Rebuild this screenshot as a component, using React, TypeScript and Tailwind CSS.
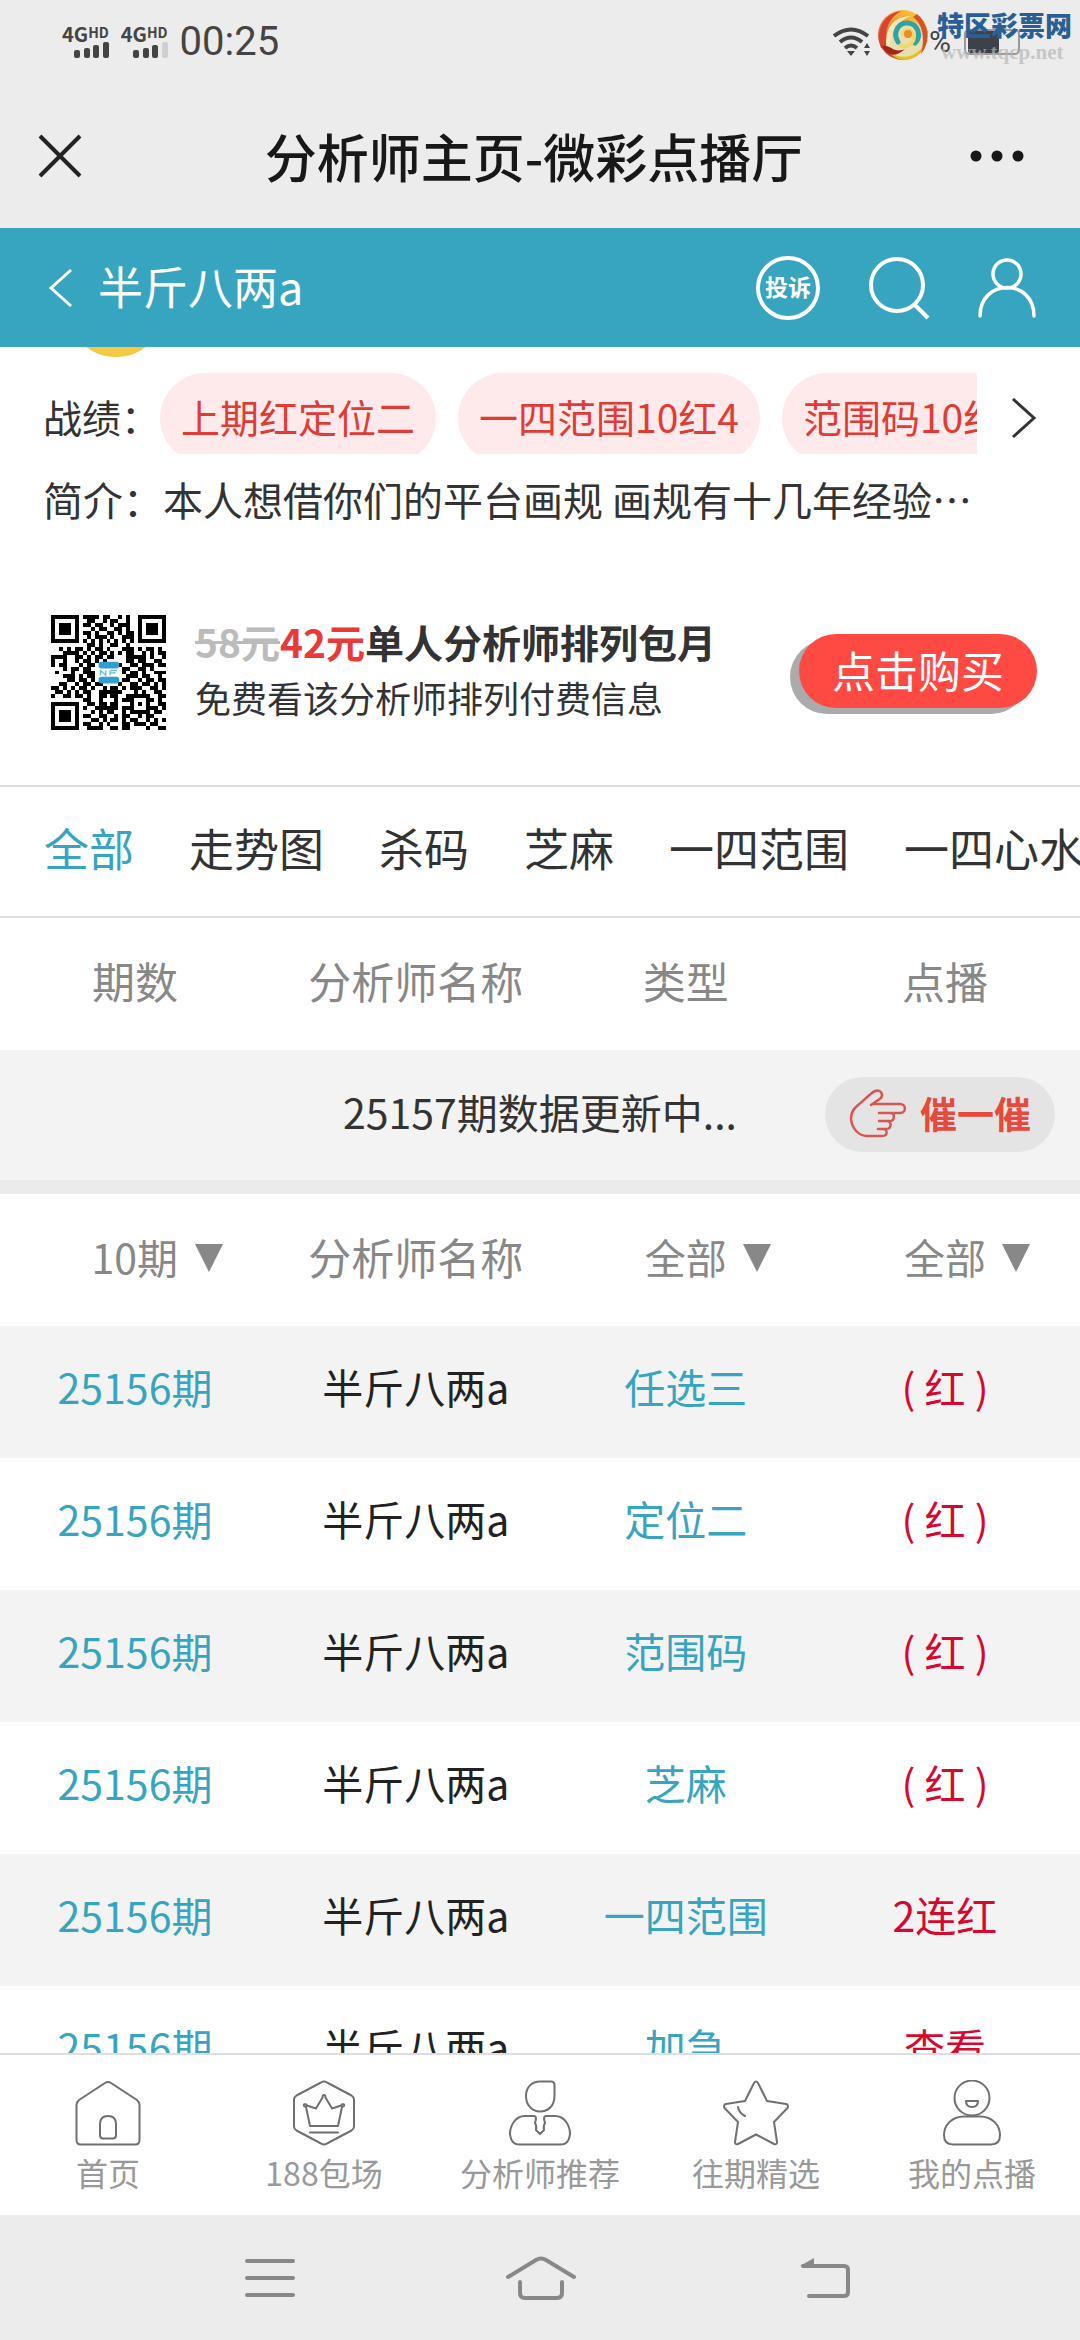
import type { ReactNode } from 'react';

const records = ['上期红定位二', '一四范围10红4', '范围码10红5'];

const tabs = ['全部', '走势图', '杀码', '芝麻', '一四范围', '一四心水'];

const rows = [
  { issue: '25156期', name: '半斤八两a', type: '任选三', result: '( 红 )' },
  { issue: '25156期', name: '半斤八两a', type: '定位二', result: '( 红 )' },
  { issue: '25156期', name: '半斤八两a', type: '范围码', result: '( 红 )' },
  { issue: '25156期', name: '半斤八两a', type: '芝麻', result: '( 红 )' },
  { issue: '25156期', name: '半斤八两a', type: '一四范围', result: '2连红' },
  { issue: '25156期', name: '半斤八两a', type: '加急', result: '查看' },
];

const qrRows = [
  '#######.####.##..#.#..#######',
  '#.....#..##..#.##..#..#.....#',
  '#.###.#.##.##..#.###..#.###.#',
  '#.###.#...#.##..##.#..#.###.#',
  '#.###.#.##.#..##.#.##.#.###.#',
  '#.....#..#.###.#..###.#.....#',
  '#######.#.#.#.#.#.#.#.#######',
  '.........##.#..##..#.........',
  '..#.#.##.#.##.#...###.#.##.#.',
  '...####.#.#.##.#.#.##..#.#.##',
  '####..##.#.##.##...#####.#..#',
  '#..#..#.##.#.#.....##.##..##.',
  '#.##...#.##......#..##.###.##',
  '...#.##.##........##..##.#...',
  '.#...#..###.......#.##.#..###',
  '...###.#.##........###.##..#.',
  '....##.##.#.......##..#.##.##',
  '..##..#.##.##....#..##.##.#.#',
  '##.#.#.##.#..#.##.#.###..##.#',
  '.##.#.#.##..######...#.#..##.',
  '#..##.##.#..##.##..######..##',
  '........##..#...#.###...##.#.',
  '#######..##.##.##...#.#.#..##',
  '#.....#.#..######.###...###.#',
  '#.###.#...#.#.##..#.#####.##.',
  '#.###.#.##..##..#.##..#.##...',
  '#.###.#...##.#.##.#.##..#.#.#',
  '#.....#.##..#.#...##.###.##..',
  '#######..####..##.##....#..##',
];

const qrPath = qrRows
  .flatMap((row, y) => [...row].map((c, x) => (c === '#' ? `M${x} ${y}h1v1h-1z` : '')))
  .join('');

const navItems: { label: string; icon: ReactNode }[] = [
  {
    label: '首页',
    icon: (
      <>
        <path d="M1.5 25Q1.5 22 4 20L30 3Q33 1 36 3L62 20Q64.5 22 64.5 25V60Q64.5 64.5 60 64.5H6Q1.5 64.5 1.5 60Z" />
        <path d="M25 44Q25 36 33 36Q41 36 41 44V55Q41 58.5 38 58.5H28Q25 58.5 25 55Z" />
      </>
    ),
  },
  {
    label: '188包场',
    icon: (
      <>
        <path d="M30 2.5Q33 .5 36 2.5L60.5 15.5Q63 17 63 19.5V46.5Q63 49 60.5 50.5L36 63.5Q33 65.5 30 63.5L5.5 50.5Q3 49 3 46.5V19.5Q3 17 5.5 15.5Z" />
        <path d="M15 27Q12 26 13 24.5Q15 23.5 16 25.5L25 28.5L31.5 17.5Q31.5 15 33 15Q34.5 15 34.5 17.5L41 28.5L50 25.5Q51 23.5 53 24.5Q54 26 51 27L47 46H19ZM19 52.5H47" />
      </>
    ),
  },
  {
    label: '分析师推荐',
    icon: (
      <>
        <path d="M33 1.5H44Q47.5 1.5 47.5 5V16C47.5 26 41 31.5 33 31.5C25 31.5 19 25 19 16C19 7 25 1.5 33 1.5Z" />
        <path d="M27 36H18C8 36 3 46 3 54Q4 64.5 12 64.5H54Q62 64.5 63 54C63 46 58 36 48 36H39Q37 36 37 39L38 43Q36 46 37 50L33 54L29 50Q30 46 28 43L29 39Q29 36 27 36Z" />
      </>
    ),
  },
  {
    label: '往期精选',
    icon: (
      <>
        <path d="M31 3Q33 0 35 3L44 21L63 24Q66 25 64.5 28L51 42L54 62Q54 65 51 64L33 54.5L15 64Q12 65 12 62L15 42L1.5 28Q0 25 3 24L22 21Z" />
        <path d="M15 27Q16 33 22 36" />
      </>
    ),
  },
  {
    label: '我的点播',
    icon: (
      <>
        <circle cx="33" cy="18" r="17.5" />
        <path d="M27 21H39Q39 27 33 27Q27 27 27 21Z" />
        <path d="M25 36.5H41C54 36.5 61 46 61 55Q61 64.5 52 64.5H14Q5 64.5 5 55C5 46 12 36.5 25 36.5Z" />
      </>
    ),
  },
];

function Signal({ weak = false }: { weak?: boolean }) {
  return (
    <div className="flex flex-col items-end text-[#444]">
      <div className="flex items-start font-bold leading-4">
        <span className="text-[20px]">4G</span>
        <span className="text-[14px] leading-3">HD</span>
      </div>
      <svg width="36" height="16" viewBox="0 0 36 16" fill="currentColor">
        <rect x="1" y="8" width="6" height="8" rx="2" />
        <rect x="11" y="6" width="6" height="10" rx="2" />
        <rect x="20" y="3" width="6" height="13" rx="2" />
        <rect x="30" y="0" width="6" height="16" rx="2" fill={weak ? '#d0d0d0' : 'currentColor'} />
      </svg>
    </div>
  );
}

function StatusBar() {
  return (
    <div className="relative flex h-[84px] items-center justify-between pl-[62px] pr-[57px]">
      <div className="flex items-center gap-3">
        <Signal />
        <Signal weak />
        <span className="font-['Roboto',sans-serif] text-[40px] leading-[40px] text-[#444]">00:25</span>
      </div>
      <div className="flex items-center text-[#444]">
        <svg width="40" height="30" viewBox="0 0 40 30" fill="none" stroke="currentColor" strokeWidth="4">
          <path d="M1 9Q18 -4 35 9" />
          <path d="M7 15Q18 6 29 15" />
          <path d="M12 21Q18 16 24 21" />
          <path d="M14 24H22L18 29ZM31 21L34 16L37 21ZM31 24L34 29L37 24Z" fill="currentColor" stroke="none" />
        </svg>
        <span className="w-[90px] pr-3 text-right font-['Roboto',sans-serif] text-[30px] leading-[30px]">67%</span>
        <svg width="60" height="28" viewBox="0 0 60 28">
          <rect x="2" y="2" width="54" height="24" rx="4" fill="none" stroke="#999" strokeWidth="2" />
          <rect x="5" y="3" width="31" height="22" rx="2" fill="#3d424a" />
        </svg>
      </div>
      <div className="absolute right-2 top-2 flex items-center gap-2">
        <SiteLogo />
        <div className="flex flex-col">
          <span className="text-[27px] font-black leading-[34px] text-[#2a5f96]">特区彩票网</span>
          <span className="pl-1 font-['Liberation_Serif',serif] text-[21px] font-bold leading-5 text-[#b5b5b5]/70">www.tqcp.net</span>
        </div>
      </div>
    </div>
  );
}

function SiteLogo() {
  return (
    <svg width="52" height="54" viewBox="0 0 52 54" fill="none" strokeLinecap="round">
      <defs>
        <linearGradient id="ball" x1="0" y1="1" x2="1" y2="0">
          <stop offset="0" stopColor="#b3261e" />
          <stop offset="0.45" stopColor="#f2913a" />
          <stop offset="1" stopColor="#ffd52e" />
        </linearGradient>
      </defs>
      <circle cx="26" cy="27" r="25" fill="url(#ball)" />
      <path d="M4 40C-2 20 8 5 24 3C12 10 6 22 10 40Z" fill="#d9432f" />
      <path d="M10 42C6 22 16 8 34 8C22 12 14 22 18 40Z" fill="#fbe6b8" />
      <path d="M12 42C14 22 24 12 38 14C48 20 50 34 42 44C32 54 18 52 12 42Z" fill="#e8dfae" />
      <path d="M40 6C52 16 54 34 44 46C48 30 46 16 36 9Z" fill="#d8502c" />
      <path d="M12 44C24 52 38 50 46 38C42 52 24 58 12 44Z" fill="#e7c21f" />
      <path d="M21 34C15 24 22 14 31 15C41 16 45 28 38 35" stroke="#2ea3a5" strokeWidth="5" />
      <path d="M24 38C32 40 39 33 36 26C34 21 27 21 26 26" stroke="#f0d96a" strokeWidth="4" />
      <circle cx="31" cy="26" r="4" fill="#f28a1e" />
      <path d="M5 38C14 36 16 46 28 41C18 50 10 48 5 38Z" fill="#a3241d" />
    </svg>
  );
}

function TitleBar() {
  return (
    <div className="flex h-36 items-center justify-between pl-[38px] pr-[56px]">
      <button aria-label="关闭">
        <svg width="44" height="44" viewBox="0 0 44 44" stroke="#222" strokeWidth="4">
          <path d="M2 2L42 42M42 2L2 42" />
        </svg>
      </button>
      <h1 className="pl-4 text-[52px] font-medium leading-[60px] text-[#181818]">分析师主页-微彩点播厅</h1>
      <button aria-label="更多">
        <svg width="54" height="12" viewBox="0 0 54 12" fill="#181818">
          <circle cx="6" cy="6" r="5.5" />
          <circle cx="27" cy="6" r="5.5" />
          <circle cx="48" cy="6" r="5.5" />
        </svg>
      </button>
    </div>
  );
}

function AppHeader() {
  return (
    <header className="relative z-10 flex h-[119px] shrink-0 items-center justify-between bg-[#37a5bf] pl-12 pr-[44px] text-white">
      <a href="#back" className="flex items-center gap-[25px]">
        <svg width="25" height="40" viewBox="0 0 25 40" fill="none" stroke="currentColor" strokeWidth="3">
          <path d="M23 2L3 20L23 38" />
        </svg>
        <span className="pb-1 text-[45px] leading-[60px]">半斤八两a</span>
      </a>
      <div className="flex items-center gap-12">
        <button className="flex size-16 items-center justify-center rounded-full border-4 border-white pb-1 text-[23px] font-bold leading-6">
          投诉
        </button>
        <button aria-label="搜索">
          <svg width="62" height="64" viewBox="0 0 62 64" fill="none" stroke="currentColor" strokeWidth="4">
            <circle cx="29" cy="29" r="26" />
            <path d="M46 48L60 62" />
          </svg>
        </button>
        <button aria-label="我的">
          <svg width="58" height="60" viewBox="0 0 58 60" fill="none" stroke="currentColor" strokeWidth="3.5" strokeLinecap="round">
            <circle cx="29" cy="16" r="14" />
            <path d="M2 58C2 20 56 20 56 58" />
          </svg>
        </button>
      </div>
    </header>
  );
}

function Profile() {
  return (
    <section className="text-[#333]">
      <div className="h-[26px] overflow-hidden pl-[66px]">
        <div className="-mt-[90px] size-[100px] rounded-full bg-[#f6c944]" />
      </div>
      <div className="flex h-[81px] items-start pl-[43px] pr-[43px]">
        <span className="w-[117px] shrink-0 text-[39px] leading-[86px]">战绩：</span>
        <div className="flex h-full min-w-0 flex-1 gap-[22px] overflow-hidden">
          {records.map((record) => (
            <span
              key={record}
              className="h-[90px] shrink-0 whitespace-nowrap rounded-full bg-[#feeaea] px-[21px] text-[39px] leading-[86px] text-[#e03c36]"
            >
              {record}
            </span>
          ))}
        </div>
        <button aria-label="更多战绩" className="flex h-[90px] w-[60px] shrink-0 items-center justify-end">
          <svg width="26" height="42" viewBox="0 0 26 42" fill="none" stroke="#333" strokeWidth="3">
            <path d="M2 2L23 21L2 40" />
          </svg>
        </button>
      </div>
      <div className="flex h-[96px] pl-[43px] pr-11 text-[40px] leading-[90px]">
        <span className="shrink-0">简介：</span>
        <p className="whitespace-nowrap">本人想借你们的平台画规 画规有十几年经验⋯</p>
      </div>
    </section>
  );
}

function Purchase() {
  return (
    <section className="flex h-[235px] items-center justify-between pl-[51px] pr-[43px] pt-[10px] text-[#333]">
      <div className="flex items-center gap-[29px]">
        <svg width="115" height="115" viewBox="0 0 29 29" shapeRendering="crispEdges">
          <path d={qrPath} fill="#000" />
          <g shapeRendering="auto">
            <rect x="12" y="11.8" width="5.2" height="1.7" rx=".7" fill="#2f9fd0" />
            <rect x="12" y="15.6" width="5.2" height="1.7" rx=".7" fill="#2f9fd0" />
            <path d="M12.5 15.2V14L13.8 15.2V14M14.9 14V15.2M16.6 14H15.1M15.1 14.6H16.3" fill="none" stroke="#6db9da" strokeWidth=".35" />
          </g>
        </svg>
        <div className="pb-2">
          <p className="text-[39px] font-bold leading-[56px]">
            <del className="text-[#bbb]">58元</del>
            <span className="text-[#e93a3a]">42元</span>
            单人分析师排列包月
          </p>
          <p className="text-[36px] leading-[56px]">免费看该分析师排列付费信息</p>
        </div>
      </div>
      <button className="mb-1 h-[74px] w-[238px] rounded-full bg-[#ff4a44] pb-1 text-[43px] leading-[64px] text-white shadow-[-9px_6px_0_#aaabad]">
        点击购买
      </button>
    </section>
  );
}

function FilterSelect({ label, options }: { label: string; options: string[] }) {
  return (
    <div className="relative inline-block">
      <select aria-label={label} className="block appearance-none bg-transparent text-[41px] leading-[60px]">
        {options.map((option) => (
          <option key={option}>{option}</option>
        ))}
      </select>
      <svg className="pointer-events-none absolute left-full top-[18px] ml-4" width="28" height="28" viewBox="0 0 28 28" fill="#888">
        <path d="M0 0H28L14 28Z" />
      </svg>
    </div>
  );
}

function UrgeButton() {
  return (
    <button className="absolute right-[25px] top-[27px] flex h-[75px] w-[230px] items-center justify-center gap-[13px] rounded-full bg-[#e4e4e4] pb-1 text-[37px] font-bold leading-[44px] text-[#e8493f]">
      <svg width="58" height="50" viewBox="0 0 58 50" fill="none" stroke="#d9554f" strokeWidth="2.5" strokeLinecap="round" strokeLinejoin="round">
        <path d="M22 17L32 10C35 6 31 1 26 3C23 4 14 13 8 18C3 22 2 26 2 31C3 41 10 48 18 48H33C39 48 39 41 34 41H29M34 41H37C43 41 43 33 38 33H30M38 33H41C46 33 46 25 42 25H30M42 25H51C57.5 25 57.5 16 51 16H24" />
      </svg>
      催一催
    </button>
  );
}

export default function App() {
  return (
    <div className="flex h-screen w-full flex-col overflow-hidden bg-white font-['Noto_Sans_CJK_SC',sans-serif]">
      <div className="shrink-0 bg-[#ececec]">
        <StatusBar />
        <TitleBar />
      </div>
      <AppHeader />

      <main className="min-h-0 flex-1 overflow-hidden">
        <Profile />
        <Purchase />

        <nav className="flex h-[133px] items-center gap-[55px] overflow-hidden border-y-2 border-[#dedede] pb-2 pl-11 text-[45px] leading-[60px] text-[#333]">
          {tabs.map((tab, index) => (
            <a key={tab} href="#tab" className={index === 0 ? 'shrink-0 text-[#37a5bf]' : 'shrink-0'}>
              {tab}
            </a>
          ))}
        </nav>

        <table className="w-full table-fixed text-center text-[41px] leading-[60px]">
          <colgroup>
            <col className="w-[25%]" />
            <col className="w-[27%]" />
            <col className="w-[23%]" />
            <col className="w-[25%]" />
          </colgroup>
          <thead>
            <tr className="h-[132px] text-[43px] text-[#888]">
              <th className="pb-2 font-normal">期数</th>
              <th className="pb-2 font-normal">分析师名称</th>
              <th className="pb-2 font-normal">类型</th>
              <th className="pb-2 font-normal">点播</th>
            </tr>
          </thead>
          <tbody>
            <tr className="h-[130px] bg-[#f3f3f3] text-[#333]">
              <td colSpan={4} className="relative pb-2">
                25157期数据更新中...
                <UrgeButton />
              </td>
            </tr>
          </tbody>
          <tbody>
            <tr className="h-[14px] bg-[#ebebeb]">
              <td colSpan={4} />
            </tr>
            <tr className="h-[132px] text-[#888]">
              <td className="pb-2">
                <FilterSelect label="期数" options={['10期', '20期', '30期']} />
              </td>
              <td className="pb-2 text-[43px]">分析师名称</td>
              <td className="pb-2">
                <FilterSelect label="类型" options={['全部']} />
              </td>
              <td className="pb-2">
                <FilterSelect label="点播" options={['全部']} />
              </td>
            </tr>
            {rows.map((row) => (
              <tr key={row.type} className="h-[132px] odd:bg-[#f3f3f3]">
                <td className="pb-3">
                  <a href="#issue" className="text-[#37a5bf]">{row.issue}</a>
                </td>
                <td className="pb-3 text-[#222]">{row.name}</td>
                <td className="pb-3">
                  <a href="#type" className="text-[#37a5bf]">{row.type}</a>
                </td>
                <td className="pb-3 text-[#d6082f]">{row.result}</td>
              </tr>
            ))}
          </tbody>
        </table>
      </main>

      <nav className="grid h-[162px] shrink-0 grid-cols-5 border-t-2 border-[#dedede] bg-white pt-[25px] text-[32px] leading-[52px] text-[#999]">
        {navItems.map((item) => (
          <a key={item.label} href="#nav" className="flex flex-col items-center whitespace-nowrap">
            <svg width="66" height="66" viewBox="0 0 66 66" className="shrink-0" fill="none" stroke="#707070" strokeWidth="2" strokeLinejoin="round" strokeLinecap="round">
              {item.icon}
            </svg>
            {item.label}
          </a>
        ))}
      </nav>

      <div className="flex h-[125px] shrink-0 items-center justify-center gap-[211px] bg-[#ececec] pl-4 text-[#888]">
        <button aria-label="菜单">
          <svg width="50" height="40" viewBox="0 0 50 40" stroke="currentColor" strokeWidth="4" strokeLinecap="round">
            <path d="M2 3H48M2 20H48M2 37H48" />
          </svg>
        </button>
        <button aria-label="主屏幕">
          <svg width="70" height="44" viewBox="0 0 70 44" fill="none" stroke="currentColor" strokeWidth="4" strokeLinecap="round">
            <path d="M2 21L30 4Q35 1 40 4L68 21M14 26V37Q14 42 19 42H51Q56 42 56 37V26" />
          </svg>
        </button>
        <button aria-label="返回" className="ml-3">
          <svg width="52" height="42" viewBox="0 0 52 42" fill="none" stroke="currentColor" strokeWidth="4" strokeLinecap="round">
            <path d="M4 9H45Q49 9 49 13V35Q49 39 45 39H10" />
            <path d="M1 9L15 1V9Z" fill="currentColor" stroke="none" />
          </svg>
        </button>
      </div>
    </div>
  );
}
